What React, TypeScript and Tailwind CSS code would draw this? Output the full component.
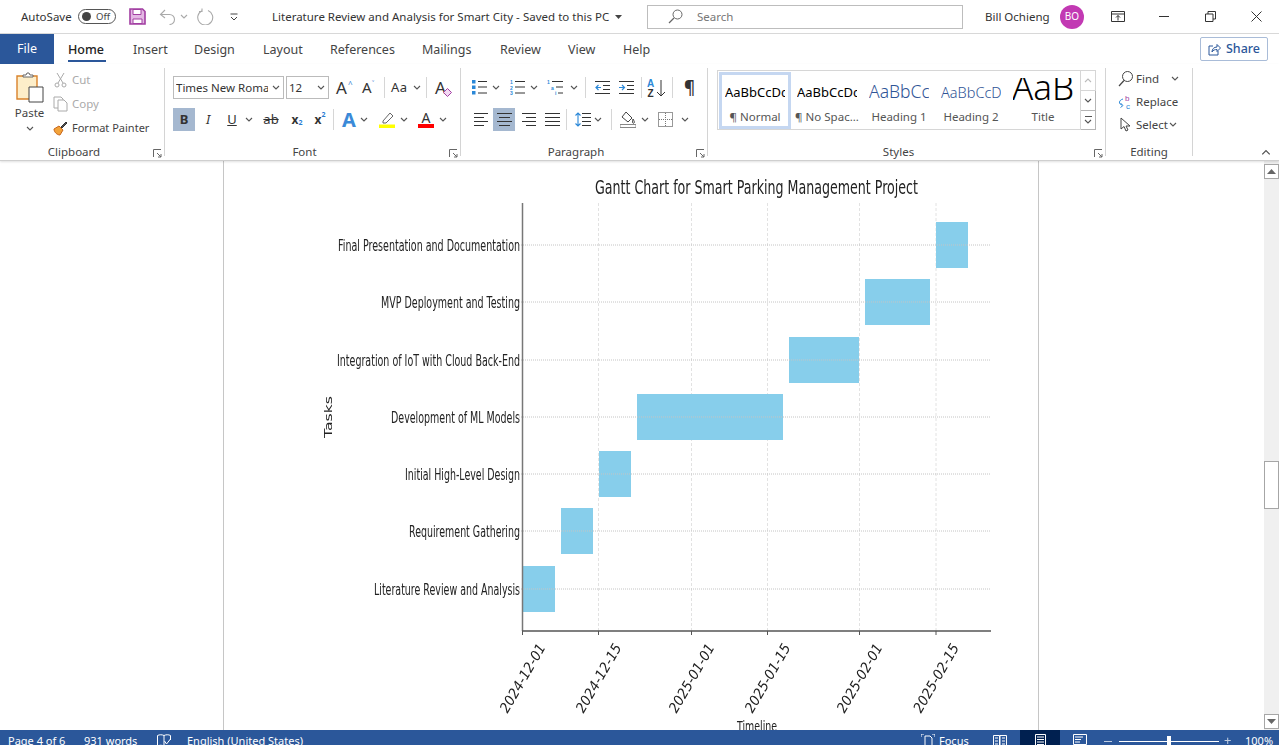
import type { ReactNode } from 'react'

const chevron = 'M1 1l3 3 3-3'

const Chev = ({ className = '' }: { className?: string }) => (
  <svg width="8" height="5" viewBox="0 0 8 5" className={className}>
    <path d={chevron} fill="none" stroke="#555" strokeWidth="1.1" />
  </svg>
)

const Launcher = () => (
  <svg width="9" height="9" viewBox="0 0 9 9">
    <path d="M.5 8V.5H8M4 4l4 4M8 5v3H5" fill="none" stroke="#666" />
  </svg>
)

const Sep = ({ className = '' }: { className?: string }) => <div className={`h-[21px] w-px shrink-0 bg-[#d6d6d6] ${className}`} />

const Group = ({ label, width, launcher = true, children }: { label: string; width: string; launcher?: boolean; children: ReactNode }) => (
  <div className={`relative h-[88px] shrink-0 border-r border-[#d4d4d4] ${width}`}>
    {children}
    <div className={`absolute bottom-[-4px] left-0 text-center text-[11.5px] leading-[16px] text-[#444] ${launcher ? 'right-[16px]' : 'right-0'}`}>{label}</div>
    {launcher && (
      <div className="absolute bottom-[-2px] right-[2px] flex">
        <Launcher />
      </div>
    )}
  </div>
)

const Lines = ({ rows, w = 16 }: { rows: [number, number][]; w?: number }) => (
  <svg width={w} height="15" viewBox={`0 0 ${w} 15`}>
    {rows.map(([a, b], i) => (
      <path key={i} d={`M${a} ${1.5 + i * (12 / (rows.length - 1))}H${b}`} stroke="#333" strokeWidth="1" />
    ))}
  </svg>
)

const tabs = [
  { name: 'Home', cls: 'w-[65px] font-medium text-[#222]', active: true },
  { name: 'Insert', cls: 'w-[61px]' },
  { name: 'Design', cls: 'w-[69px]' },
  { name: 'Layout', cls: 'w-[67px]' },
  { name: 'References', cls: 'w-[92px]' },
  { name: 'Mailings', cls: 'w-[78px]' },
  { name: 'Review', cls: 'w-[68px]' },
  { name: 'View', cls: 'w-[55px]' },
  { name: 'Help', cls: 'w-[40px]' },
]

const TitleBar = () => (
  <div className="flex h-[34px] shrink-0 items-center border-b border-[#d8d8d8] pl-[21px] text-[11.5px] text-[#333]">
    <span className="w-[57px]">AutoSave</span>
    <div className="flex h-[15px] w-[38px] items-center rounded-full border border-[#555] pl-[3px]">
      <div className="h-[9px] w-[9px] rounded-full bg-[#444]" />
      <span className="ml-[5px] text-[9.5px] leading-none text-[#444]">Off</span>
    </div>
    <svg width="17" height="17" viewBox="0 0 17 17" className="ml-[13px]">
      <path d="M1 1h12.500L16 3.500V16H1z" fill="#e3b8e3" stroke="#a23fa2" strokeWidth="1.6" />
      <path d="M4 1.500h8v5H4zM4 11h9v4.500H4z" fill="#fff" stroke="#a23fa2" />
    </svg>
    <svg width="17" height="16" viewBox="0 0 17 16" className="ml-[13px]">
      <path d="M6 1L1.500 5.500 6 9M2 5.500h8.500a5 5 0 0 1 0 10" fill="none" stroke="#aaa" strokeWidth="1.1" />
    </svg>
    <Chev className="ml-[4px] opacity-50" />
    <svg width="18" height="17" viewBox="0 0 18 17" className="ml-[9px]">
      <path d="M11 2.500a7.500 7.500 0 1 1-6 .2M5 .5v3h-3" fill="none" stroke="#aaa" strokeWidth="1.1" />
    </svg>
    <svg width="8" height="8" viewBox="0 0 8 8" className="ml-[15px]">
      <path d="M.5 1h7M1 4l3 3 3-3" fill="none" stroke="#444" />
    </svg>
    <span className="ml-[34px] w-[251px] whitespace-pre">Literature Review and Analysis for Smart City -</span>
    <span className="w-[92px] whitespace-nowrap">Saved to this PC</span>
    <svg width="7" height="4" viewBox="0 0 7 4">
      <path d="M0 0h7L3.500 4z" fill="#444" />
    </svg>
    <div className="ml-[25px] flex h-[24px] w-[316px] items-center border border-[#bdbdbd] pl-[20px] text-[#777]">
      <svg width="15" height="15" viewBox="0 0 15 15">
        <circle cx="9.500" cy="5.500" r="4.500" fill="none" stroke="#666" />
        <path d="M6 9l-5 5" stroke="#666" strokeWidth="1.2" />
      </svg>
      <span className="ml-[14px]">Search</span>
    </div>
    <span className="ml-[22px] w-[75px] whitespace-nowrap">Bill Ochieng</span>
    <div className="flex h-[24px] w-[24px] items-center justify-center rounded-full bg-[#c239b3] text-[10px] text-white">BO</div>
    <svg width="14" height="11" viewBox="0 0 14 11" className="ml-[27px]">
      <path d="M.5.500h13v10H.5zM.5 3h13M7 9.500V4.500M5 6.500l2-2 2 2" fill="none" stroke="#333" />
    </svg>
    <div className="ml-[34px] h-px w-[10px] bg-[#333]" />
    <svg width="11" height="11" viewBox="0 0 11 11" className="ml-[36px]">
      <path d="M.5 3h7.500v7.500H.5zM3 3V.5h7.500V8H8" fill="#fff" stroke="#333" />
    </svg>
    <svg width="11" height="11" viewBox="0 0 11 11" className="ml-[35px]">
      <path d="M.5.500l10 10M10.500.5l-10 10" stroke="#333" />
    </svg>
  </div>
)

const TabRow = () => (
  <div className="flex h-[30px] shrink-0 items-stretch text-[12.5px] text-[#444]">
    <div className="flex w-[54px] items-center justify-center bg-[#2b579a] pt-px text-white">File</div>
    <div className="ml-[14px] flex pt-[2px]">
      {tabs.map((t) => (
        <div key={t.name} className={`relative flex items-center ${t.cls}`}>
          {t.name}
          {t.active && <div className="absolute bottom-[2px] left-0 h-[2px] w-[38px] bg-[#2b579a]" />}
        </div>
      ))}
    </div>
    <div className="ml-auto mr-[11px] mt-[3px] flex h-[24px] w-[68px] items-center justify-center gap-[5px] rounded-[2px] border border-[#a9bcd8] font-medium text-[#2b579a]">
      <svg width="13" height="13" viewBox="0 0 13 13">
        <path d="M5 3H1v9h9V8M4 9c0-3 2-5 5-5V1.500L12.500 5 9 8.500V6.500C7 6.500 5 7 4 9z" fill="none" stroke="#2b579a" />
      </svg>
      Share
    </div>
  </div>
)

const Clipboard = () => (
  <Group label="Clipboard" width="w-[165px]">
    <div className="flex h-full">
      <div className="ml-[13px] flex w-[33px] flex-col items-center pt-[4px] text-[11.5px] text-[#444]">
        <svg width="28" height="31" viewBox="0 0 28 31">
          <path d="M1 4h20v23H1z" fill="#fdeec9" stroke="#d9822b" strokeWidth="1.4" />
          <path d="M7 5V3h3l1-2h2l1 2h3v2z" fill="#fff" stroke="#666" />
          <path d="M13 15h14v15H13z" fill="#fff" stroke="#444" />
        </svg>
        <span className="mt-[2px] leading-[16px]">Paste</span>
        <Chev className="mt-[5px]" />
      </div>
      <div className="ml-[7px] flex flex-col gap-[6px] pt-[3px] text-[11.5px]">
        <div className="flex h-[18px] items-center text-[#aaa]">
          <svg width="15" height="16" viewBox="0 0 15 16">
            <path d="M4 1l6 10M11 1L5 11" stroke="#aaa" fill="none" />
            <circle cx="4" cy="13" r="2" fill="none" stroke="#aaa" />
            <circle cx="11" cy="13" r="2" fill="none" stroke="#aaa" />
          </svg>
          <span className="ml-[4px]">Cut</span>
        </div>
        <div className="flex h-[18px] items-center text-[#aaa]">
          <svg width="15" height="16" viewBox="0 0 15 16">
            <path d="M1 1h7l2 2v1M1 1v11h4M5 4h6l3 3v8H5z" fill="none" stroke="#aaa" />
          </svg>
          <span className="ml-[4px]">Copy</span>
        </div>
        <div className="flex h-[18px] items-center whitespace-nowrap text-[11px] text-[#444]">
          <svg width="15" height="15" viewBox="0 0 15 15">
            <path d="M1 8l5-3 4 4-3 5c-3 0-6-3-6-6z" fill="#f2a33a" stroke="#c8661b" />
            <path d="M8 6l5-5 1 1-5 5z" fill="#555" stroke="#333" />
          </svg>
          <span className="ml-[4px]">Format Painter</span>
        </div>
      </div>
    </div>
  </Group>
)

const FontGroup = () => (
  <Group label="Font" width="w-[296px]">
    <div className="mt-[8px] flex h-[23px] items-center pl-[8px] text-[#333]">
      <div className="flex h-[23px] w-[111px] items-center justify-between border border-[#bbb] pl-[2px] pr-[3px] text-[11.5px]">
        <span className="w-[92px] overflow-hidden whitespace-nowrap">Times New Roman</span>
        <Chev />
      </div>
      <div className="ml-[2px] flex h-[23px] w-[43px] items-center justify-between border border-[#bbb] pl-[2px] pr-[3px] text-[11.5px]">
        12
        <Chev />
      </div>
      <span className="ml-[7px] w-[12px] text-[17px] leading-none">A</span>
      <span className="-mt-[8px] w-[5px] text-[8px] leading-none text-[#2b7cd3]">^</span>
      <span className="ml-[9px] w-[10px] text-[15px] leading-none">A</span>
      <span className="-mt-[8px] w-[5px] text-[8px] leading-none text-[#2b7cd3]">˅</span>
      <Sep className="ml-[7px]" />
      <span className="ml-[6px] w-[22px] text-[13px] tracking-wide">Aa</span>
      <Chev />
      <Sep className="ml-[5px]" />
      <span className="relative ml-[8px] text-[17px] leading-none">
        A
        <svg width="9" height="9" viewBox="0 0 9 9" className="absolute -bottom-[1px] -right-[6px]">
          <path d="M4.500.5l4 4-4 4-4-4z" fill="#f3d9f3" stroke="#a23fa2" />
        </svg>
      </span>
    </div>
    <div className="mt-[9px] flex h-[23px] items-center pl-[8px] text-[#333]">
      <div className="flex h-[23px] w-[22px] items-center justify-center bg-[#a5b8d0] text-[13px] font-bold">B</div>
      <div className="flex w-[26px] justify-center text-[13px] italic">I</div>
      <div className="flex w-[22px] justify-center text-[13px] underline">U</div>
      <div className="flex w-[12px] justify-center">
        <Chev />
      </div>
      <div className="flex w-[32px] justify-center text-[13px] line-through">ab</div>
      <div className="flex w-[20px] justify-center text-[12px] font-bold">
        x<span className="mt-[7px] text-[7px] text-[#2b7cd3]">2</span>
      </div>
      <div className="flex w-[26px] justify-center text-[12px] font-bold">
        x<span className="-mt-[1px] text-[7px] text-[#2b7cd3]">2</span>
      </div>
      <Sep />
      <div className="flex w-[30px] justify-center text-[20px] font-bold leading-none text-[#3b8ad8]">A</div>
      <Chev className="-ml-[4px]" />
      <svg width="16" height="17" viewBox="0 0 16 17" className="ml-[11px]">
        <path d="M4 10l7-8 3 3-7 7H4z" fill="#fff" stroke="#666" />
        <path d="M0 13.500h16V17H0z" fill="#ffff00" />
      </svg>
      <Chev className="ml-[5px]" />
      <div className="ml-[10px] flex w-[16px] flex-col items-center">
        <span className="text-[14px] leading-[13px]">A</span>
        <div className="h-[4px] w-[16px] bg-[#ff0000]" />
      </div>
      <Chev className="ml-[5px]" />
    </div>
  </Group>
)

const Bullets = ({ color }: { color: string }) => (
  <svg width="15" height="15" viewBox="0 0 15 15">
    <path d="M0 0h3.500v3.500H0zM0 5.500h3.500V9H0zM0 11h3.500v3.500H0z" fill={color} />
    <path d="M6 1.500h9M6 7h9M6 13h9" stroke="#333" />
  </svg>
)

const Paragraph = () => (
  <Group label="Paragraph" width="w-[247px]">
    <div className="mt-[8px] flex h-[23px] items-center pl-[11px]">
      <Bullets color="#2b88d8" />
      <Chev className="ml-[5px]" />
      <div className="ml-[10px]">
        <svg width="15" height="15" viewBox="0 0 15 15">
          <text x="0" y="4" fontSize="5" fill="#2b88d8" fontFamily="Liberation Sans" fontWeight="700">1</text>
          <text x="0" y="9.500" fontSize="5" fill="#2b88d8" fontFamily="Liberation Sans" fontWeight="700">2</text>
          <text x="0" y="15" fontSize="5" fill="#2b88d8" fontFamily="Liberation Sans" fontWeight="700">3</text>
          <path d="M5 1.500h10M5 7h10M5 13h10" stroke="#333" />
        </svg>
      </div>
      <Chev className="ml-[5px]" />
      <div className="ml-[9px]">
        <svg width="16" height="15" viewBox="0 0 16 15">
          <text x="0" y="4" fontSize="5" fill="#2b88d8" fontFamily="Liberation Sans" fontWeight="700">1</text>
          <text x="4" y="9.500" fontSize="5" fill="#2b88d8" fontFamily="Liberation Sans" fontWeight="700">a</text>
          <text x="8" y="15" fontSize="5" fill="#2b88d8" fontFamily="Liberation Sans" fontWeight="700">i</text>
          <path d="M5 1.500h11M9 7h7M11 13h5" stroke="#333" />
        </svg>
      </div>
      <Chev className="ml-[7px]" />
      <Sep className="ml-[7px]" />
      <svg width="15" height="13" viewBox="0 0 15 13" className="ml-[9px]">
        <path d="M0 .5h15M8 4.500h7M8 8.500h7M0 12.500h15" stroke="#333" />
        <path d="M6 6.500H1M3.500 4L1 6.500 3.500 9" fill="none" stroke="#2b88d8" strokeWidth="1.2" />
      </svg>
      <svg width="15" height="13" viewBox="0 0 15 13" className="ml-[9px]">
        <path d="M0 .5h15M8 4.500h7M8 8.500h7M0 12.500h15" stroke="#333" />
        <path d="M0 6.500h5M3 4l2.500 2.500L3 9" fill="none" stroke="#2b88d8" strokeWidth="1.2" />
      </svg>
      <Sep className="ml-[7px]" />
      <svg width="19" height="18" viewBox="0 0 19 18" className="ml-[5px]">
        <text x="0" y="8" fontSize="10" fontWeight="700" fill="#2b88d8" fontFamily="Liberation Sans">A</text>
        <text x="0.500" y="18" fontSize="10" fontWeight="700" fill="#333" fontFamily="Liberation Sans">Z</text>
        <path d="M14 1v16M10 13l4 4 4-4" fill="none" stroke="#333" />
      </svg>
      <Sep className="ml-[6px]" />
      <span className="ml-[11px] text-[17px] font-semibold leading-none text-[#333]">¶</span>
    </div>
    <div className="mt-[9px] flex h-[23px] items-center pl-[8px]">
      <div className="flex w-[24px] justify-center">
        <Lines rows={[[0, 14], [0, 10], [0, 14], [0, 10]]} w={15} />
      </div>
      <div className="flex h-[23px] w-[22px] items-center justify-center bg-[#a5b8d0]">
        <Lines rows={[[0, 15], [2, 13], [0, 15], [2, 13]]} w={15} />
      </div>
      <div className="flex w-[26px] justify-center">
        <Lines rows={[[1, 15], [5, 15], [1, 15], [5, 15]]} w={15} />
      </div>
      <div className="flex w-[22px] justify-center">
        <Lines rows={[[0, 15], [0, 15], [0, 15], [0, 15]]} w={15} />
      </div>
      <Sep className="ml-[3px]" />
      <svg width="16" height="15" viewBox="0 0 16 15" className="ml-[8px]">
        <path d="M7 1.500h9M7 5.500h9M7 9.500h9M7 13.500h9" stroke="#333" />
        <path d="M3 1v13M.5 3.500L3 1l2.500 2.500M.5 11.500L3 14l2.500-2.500" fill="none" stroke="#2b88d8" strokeWidth="1.1" />
      </svg>
      <Chev className="ml-[3px]" />
      <Sep className="ml-[9px]" />
      <svg width="16" height="17" viewBox="0 0 16 17" className="ml-[8px]">
        <path d="M6 1l6 6-4 4-6-5zM13 8c1 2 2 3 1 4s-2 0-1-4z" fill="#fff" stroke="#444" />
        <path d="M0 13.500h16V16.500H0z" fill="#fff" stroke="#888" />
      </svg>
      <Chev className="ml-[5px]" />
      <svg width="15" height="15" viewBox="0 0 15 15" className="ml-[9px]">
        <path d="M.5.500h14v14H.5z" fill="none" stroke="#333" strokeDasharray="1 1" />
        <path d="M7.500 1v13M1 7.500h13" stroke="#777" strokeDasharray="1 1" />
      </svg>
      <Chev className="ml-[8px]" />
    </div>
  </Group>
)

const styles = [
  { name: 'Normal', cls: 'h-[35px] text-[13px] text-black', selected: true, marker: true, text: 'AaBbCcDc' },
  { name: 'No Spac...', cls: 'h-[35px] text-[13px] text-black', marker: true, text: 'AaBbCcDc' },
  { name: 'Heading 1', cls: 'h-[35px] text-[17.5px] font-light text-[#2f5496]', text: 'AaBbCcI' },
  { name: 'Heading 2', cls: 'h-[35px] text-[14.5px] font-light text-[#2f5496]', text: 'AaBbCcD' },
  { name: 'Title', cls: 'mt-[3px] h-[32px] justify-center pb-[15px] text-[35px] font-light text-black', text: 'AaB' },
]

const Styles = () => (
  <Group label="Styles" width="w-[398px]">
    <div className="ml-[9px] mt-[2px] flex">
      <div className="flex h-[60px] w-[364px] items-center border border-[#d6d6d6] pl-px">
        {styles.map((s) => (
          <div
            key={s.name}
            className={`flex h-[57px] w-[72px] flex-col items-center overflow-hidden border-[3px] ${s.selected ? 'border-[#c5d7f1]' : 'border-transparent'}`}
          >
            <div className={`flex w-[60px] items-center overflow-hidden whitespace-nowrap leading-none ${s.cls}`}>{s.text}</div>
            <div className="whitespace-nowrap text-[11.5px] leading-[14px] text-[#555]">
              {s.marker ? '¶ ' : ''}
              {s.name}
            </div>
          </div>
        ))}
      </div>
      <div className="flex w-[15px] flex-col">
        <div className="flex h-[21px] items-center justify-center border border-l-0 border-[#d6d6d6]">
          <Chev className="rotate-180 opacity-40" />
        </div>
        <div className="flex h-[19px] items-center justify-center border-r border-[#b5b5b5]">
          <Chev />
        </div>
        <div className="flex h-[20px] flex-col items-center justify-center border border-l-0 border-[#b5b5b5]">
          <div className="mb-[2px] h-px w-[7px] bg-[#555]" />
          <Chev />
        </div>
      </div>
    </div>
  </Group>
)

const Editing = () => (
  <Group label="Editing" width="w-[87px]" launcher={false}>
    <div className="-mt-px flex flex-col pl-[12px] text-[11.5px] text-[#444]">
      <div className="flex h-[23px] items-center">
        <svg width="15" height="16" viewBox="0 0 15 16">
          <circle cx="9.500" cy="5.500" r="5" fill="none" stroke="#444" />
          <path d="M6 9.500l-5 5.500" stroke="#444" strokeWidth="1.2" />
        </svg>
        <span className="ml-[3px]">Find</span>
        <Chev className="ml-[12px]" />
      </div>
      <div className="flex h-[23px] items-center">
        <svg width="15" height="15" viewBox="0 0 15 15">
          <text x="7" y="7" fontSize="8" fill="#a23fa2" fontFamily="Liberation Sans">b</text>
          <text x="8" y="15" fontSize="8" fill="#2b88d8" fontFamily="Liberation Sans">c</text>
          <path d="M5 5C1 6 0 10 4 11M2.500 9L5 11.500 2.500 13.500" fill="none" stroke="#2b88d8" />
        </svg>
        <span className="ml-[3px]">Replace</span>
      </div>
      <div className="flex h-[23px] items-center">
        <svg width="15" height="15" viewBox="0 0 15 15">
          <path d="M3 1v11l3-2.500L8 14l2-1-2-4h4z" fill="#fff" stroke="#444" />
        </svg>
        <span className="ml-[3px]">Select</span>
        <Chev className="ml-[1px]" />
      </div>
    </div>
  </Group>
)

const Ribbon = () => (
  <div className="relative flex h-[97px] shrink-0 items-start border-b border-[#cfcfcf] pt-[4px] shadow-[0_1px_2px_rgba(0,0,0,0.12)]">
    <Clipboard />
    <FontGroup />
    <Paragraph />
    <Styles />
    <Editing />
    <Chev className="absolute bottom-[5px] right-[9px] rotate-180 scale-125" />
  </div>
)

const tasks = [
  { label: 'Final Presentation and Documentation', y: 245, x1: 936, x2: 968, w: 182 },
  { label: 'MVP Deployment and Testing', y: 302, x1: 865, x2: 930, w: 139 },
  { label: 'Integration of IoT with Cloud Back-End', y: 360, x1: 789, x2: 859, w: 183 },
  { label: 'Development of ML Models', y: 417, x1: 637, x2: 783, w: 129 },
  { label: 'Initial High-Level Design', y: 474, x1: 599, x2: 631, w: 115 },
  { label: 'Requirement Gathering', y: 531, x1: 561, x2: 593, w: 111 },
  { label: 'Literature Review and Analysis', y: 589, x1: 523, x2: 555, w: 146 },
]

const ticks = [
  { x: 522.5, label: '2024-12-01' },
  { x: 598.5, label: '2024-12-15' },
  { x: 691.5, label: '2025-01-01' },
  { x: 767.5, label: '2025-01-15' },
  { x: 859.5, label: '2025-02-01' },
  { x: 936, label: '2025-02-15' },
]

const Chart = () => (
  <svg width="814" height="569" viewBox="224 161 814 569" className="block blur-[0.4px]" fontFamily="DejaVu Sans, sans-serif" fill="#222">
    <text x="756.500" y="194" textAnchor="middle" fontSize="20" textLength="323" lengthAdjust="spacingAndGlyphs">
      Gantt Chart for Smart Parking Management Project
    </text>
    {ticks.slice(1).map((t) => (
      <path key={t.x} d={`M${t.x} 203V631`} stroke="#e2e2e2" strokeDasharray="3 2" />
    ))}
    {tasks.map((t) => (
      <g key={t.label}>
        <rect x={t.x1} y={t.y - 23} width={t.x2 - t.x1} height="46" fill="#87ceeb" />
        <path d={`M519 ${t.y}H990`} stroke="#c4c4c4" strokeDasharray="1 1" />
        <text x="520" y={t.y + 6} textAnchor="end" fontSize="16" textLength={t.w} lengthAdjust="spacingAndGlyphs">
          {t.label}
        </text>
      </g>
    ))}
    <path d="M522.500 203V631" stroke="#777" strokeWidth="1.5" />
    <path d="M522 631H991" stroke="#555" strokeWidth="1.5" />
    {ticks.map((t) => (
      <g key={t.label}>
        <path d={`M${t.x} 631v4`} stroke="#555" />
        <text
          x={t.x}
          y="683"
          textAnchor="middle"
          fontSize="14"
          fontStyle="italic"
          textLength="77"
          lengthAdjust="spacingAndGlyphs"
          transform={`rotate(-60 ${t.x} 678)`}
        >
          {t.label}
        </text>
      </g>
    ))}
    <text x="332" y="417" textAnchor="middle" fontSize="11" textLength="42" lengthAdjust="spacingAndGlyphs" transform="rotate(-90 332 417)">
      Tasks
    </text>
    <text x="757" y="731" textAnchor="middle" fontSize="14" textLength="40" lengthAdjust="spacingAndGlyphs">
      Timeline
    </text>
  </svg>
)

const Scrollbar = () => (
  <div className="flex w-[15px] shrink-0 flex-col bg-[#f0f0f0] pt-[3px]">
    <div className="flex h-[15px] items-center justify-center border border-[#a6a6a6] bg-white">
      <svg width="9" height="5" viewBox="0 0 9 5"><path d="M0 5l4.500-5L9 5z" fill="#666" /></svg>
    </div>
    <div className="mt-[282px] h-[48px] border border-[#a6a6a6] bg-white" />
    <div className="mb-px mt-auto flex h-[15px] items-center justify-center border border-[#a6a6a6] bg-white">
      <svg width="9" height="5" viewBox="0 0 9 5"><path d="M0 0l4.500 5L9 0z" fill="#666" /></svg>
    </div>
  </div>
)

const StatusBar = () => (
  <div className="h-[15px] shrink-0 overflow-hidden bg-[#2b579a]">
    <div className="flex h-[22px] items-center pl-[8px] text-[11px] text-white">
      <span className="w-[76px]">Page 4 of 6</span>
      <span className="w-[73px]">931 words</span>
      <svg width="14" height="14" viewBox="0 0 14 14">
        <path d="M7 1.500C5 .5 2.500 .5 .5 1.500V12c2-1 4.500-1 6.500 0 .3 0 .5-.2 1-.5M7 1.500c2-1 4.500-1 6.500 0V6M7 1.500V12M7.500 7l2 3 4-5" fill="none" stroke="#fff" />
      </svg>
      <span className="ml-[16px] w-[734px] whitespace-nowrap">English (United States)</span>
      <svg width="14" height="14" viewBox="0 0 14 14">
        <path d="M0 3V0h3M11 0h3v3M4 14V2h5l2 2v10z" fill="none" stroke="#fff" />
      </svg>
      <span className="ml-[4px] w-[54px]">Focus</span>
      <svg width="14" height="13" viewBox="0 0 14 13">
        <path d="M.5.500h6v12h-6zM7 .5h6.500v12H7zM2 3h3M2 6h3M2 9h3M9 3h3M9 6h3M9 9h3" fill="none" stroke="#fff" />
      </svg>
      <div className="ml-[13px] flex h-[22px] w-[40px] items-center justify-center bg-[#002050]">
        <svg width="11" height="14" viewBox="0 0 11 14">
          <path d="M.5.500h10v13H.5zM2 3h7M2 5.500h7M2 8h7M2 10.500h7" fill="none" stroke="#fff" />
        </svg>
      </div>
      <svg width="14" height="14" viewBox="0 0 14 14" className="ml-[13px]">
        <path d="M.5.500h13v10H.5zM2 3h8M2 5.500h6M2 8h5" fill="none" stroke="#fff" />
      </svg>
      <div className="ml-[17px] h-px w-[8px] bg-white opacity-70" />
      <div className="relative ml-[7px] h-px w-[100px] bg-white">
        <div className="absolute left-[48px] top-[-5px] h-[11px] w-[4px] bg-white" />
      </div>
      <span className="ml-[5px] w-[21px] text-[13px] opacity-70">+</span>
      <span>100%</span>
    </div>
  </div>
)

export default function App() {
  return (
    <div className="flex h-screen flex-col overflow-hidden bg-white font-['Noto_Sans',sans-serif]">
      <TitleBar />
      <TabRow />
      <Ribbon />
      <div className="flex min-h-0 flex-1">
        <div className="flex-1 pl-[223px]">
          <div className="h-full w-[816px] border-x border-[#c6c6c6]">
            <Chart />
          </div>
        </div>
        <Scrollbar />
      </div>
      <StatusBar />
    </div>
  )
}
